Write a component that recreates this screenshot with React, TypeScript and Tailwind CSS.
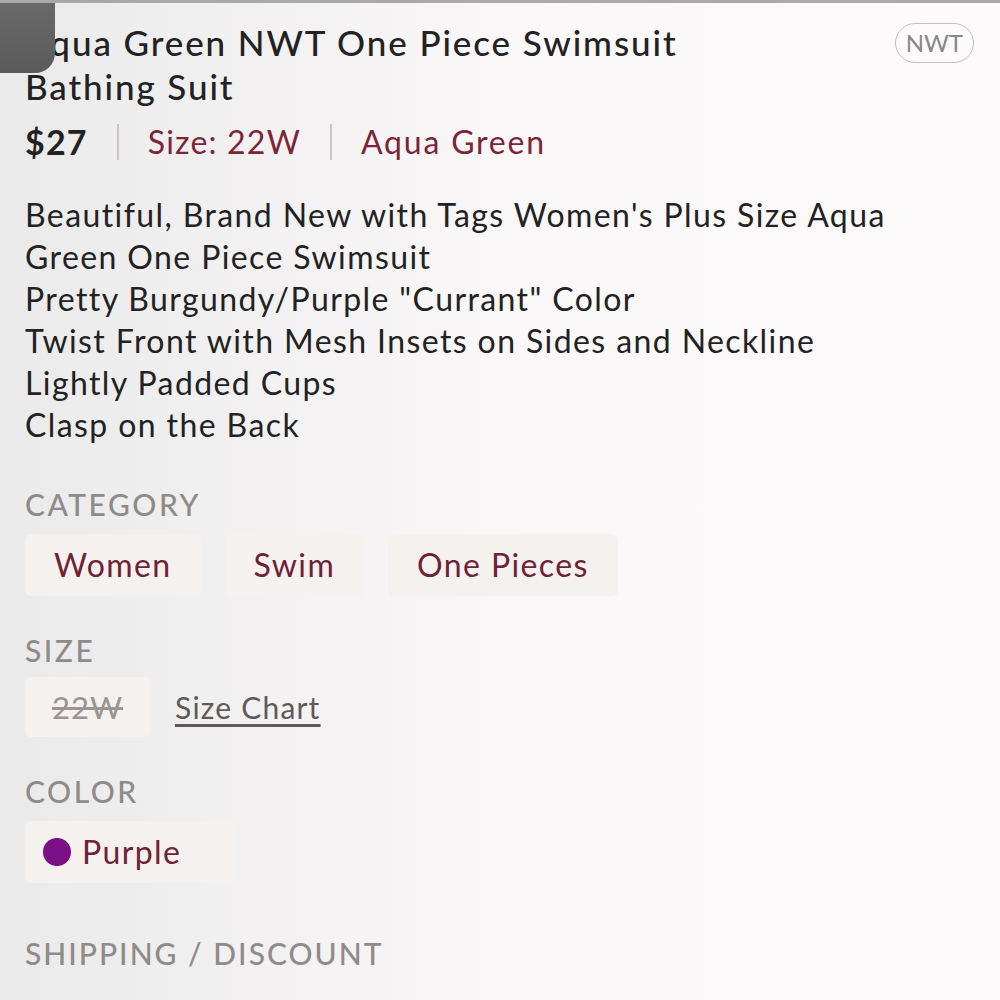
export default function App() {
  const font = { fontFamily: "Lato, 'Noto Sans', sans-serif" };
  return (
    <div
      className="relative w-[1000px] h-[1000px] overflow-hidden bg-gradient-to-r from-[#ebeaea] via-[#f9f7f8] to-[#fcfafb] border-t-[3px] border-[#a9a9a9]"
      style={font}
    >
      {/* top-left overlay */}
      <div className="absolute left-0 top-0 w-[55px] h-[70px] rounded-br-[20px] bg-gradient-to-b from-[#6a6a6a] to-[#5a5a5a]" />

      <div className="px-[25px] pt-[17px]">
        <div className="flex items-start justify-between">
          <h1 className="text-[35px] leading-[44px] font-medium tracking-[1.9px] text-[#222] max-w-[720px]">
            Aqua Green NWT One Piece Swimsuit Bathing Suit
          </h1>
          <span className="mt-[3px] mr-[1px] px-[10px] h-[40px] flex items-center rounded-full border-[1.5px] border-[#c2bebe] text-[24px] text-[#8a8787]">
            NWT
          </span>
        </div>

        <div className="mt-[14px] flex items-center text-[32px] leading-[40px] tracking-[1.2px]">
          <span className="font-bold text-[34px] text-[#222]">$27</span>
          <span className="mx-[29px] w-[2px] h-[36px] bg-[#c8c4c4]" />
          <span className="text-[#7a2637]">Size: 22W</span>
          <span className="mx-[29px] w-[2px] h-[36px] bg-[#c8c4c4]" />
          <span className="text-[#7a2637] tracking-[1.8px]">Aqua Green</span>
        </div>

        <div className="mt-[32px] text-[32px] leading-[42px] tracking-[1.4px] text-[#222]">
          <p>Beautiful, Brand New with Tags Women's Plus Size Aqua</p>
          <p>Green One Piece Swimsuit</p>
          <p>Pretty Burgundy/Purple "Currant" Color</p>
          <p>Twist Front with Mesh Insets on Sides and Neckline</p>
          <p>Lightly Padded Cups</p>
          <p>Clasp on the Back</p>
        </div>

        <h2 className="mt-[38px] text-[30px] leading-[40px] font-medium tracking-[2.5px] text-[#8f8b88] uppercase">
          Category
        </h2>
        <div className="mt-[10px] flex gap-[24px]">
          {["Women", "Swim", "One Pieces"].map((c) => (
            <span
              key={c}
              className="h-[62px] px-[29px] flex items-center rounded-[6px] bg-[#f4f1ef] text-[32px] tracking-[1.4px] text-[#6e2233]"
            >
              {c}
            </span>
          ))}
        </div>

        <h2 className="mt-[34px] text-[30px] leading-[40px] font-medium tracking-[2.5px] text-[#8f8b88] uppercase">
          Size
        </h2>
        <div className="mt-[7px] flex items-center gap-[25px]">
          <span className="h-[60px] px-[27px] flex items-center rounded-[6px] bg-[#f4f1ef] text-[31px] tracking-[1px] text-[#9a9591] line-through">
            22W
          </span>
          <span className="text-[30px] tracking-[1.2px] text-[#5f5a57] underline underline-offset-[5px]">
            Size Chart
          </span>
        </div>

        <h2 className="mt-[34px] text-[30px] leading-[40px] font-medium tracking-[2.5px] text-[#8f8b88] uppercase">
          Color
        </h2>
        <div className="mt-[10px] flex">
          <span className="h-[62px] pl-[18px] pr-[55px] flex items-center gap-[11px] rounded-[6px] bg-[#f4f1ef] text-[32px] tracking-[1.4px] text-[#6e2233]">
            <span className="w-[28px] h-[28px] rounded-full bg-[#7b0f86]" />
            Purple
          </span>
        </div>

        <h2 className="mt-[50px] text-[30px] leading-[40px] font-medium tracking-[2px] text-[#8f8b88] uppercase">
          Shipping / Discount
        </h2>
      </div>
    </div>
  );
}
